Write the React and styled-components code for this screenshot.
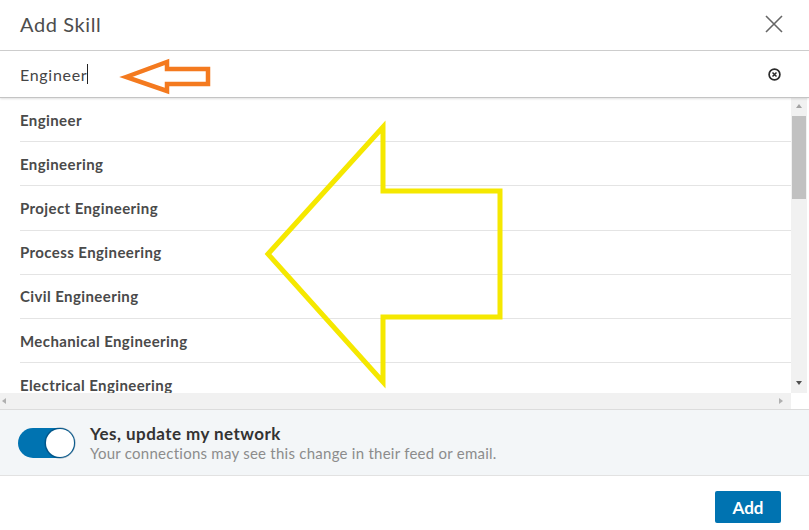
import React from 'react';
import styled, { createGlobalStyle } from 'styled-components';

const Global = createGlobalStyle`
  html, body { margin: 0; padding: 0; background: #fff; }
  body { font-family: Lato, "Open Sans", "Liberation Sans", sans-serif; }
  * { box-sizing: border-box; }
`;

const Modal = styled.div`
  position: relative;
  width: 809px;
  height: 530px;
  overflow: hidden;
  display: flex;
  flex-direction: column;
  background: #fff;
`;

const Header = styled.header`
  height: 51px;
  flex: none;
  display: flex;
  align-items: center;
  justify-content: space-between;
  padding: 0 26px 2px 20px;
  border-bottom: 1px solid #cfcfcf;
`;

const Title = styled.h2`
  margin: 0;
  font-size: 20px;
  letter-spacing: 0.6px;
  font-weight: 400;
  color: #4d4d4d;
`;

const IconButton = styled.button`
  border: 0;
  background: none;
  padding: 0;
  display: flex;
  width: ${p => p.$size}px;
  height: ${p => p.$size}px;
  color: ${p => p.$color};
  cursor: pointer;
`;

const SearchRow = styled.div`
  height: 47px;
  flex: none;
  display: flex;
  align-items: center;
  justify-content: space-between;
  padding: 0 28px 0 20px;
  border-bottom: 1px solid #c4c4c4;
  box-shadow: 0 1px 2px rgba(0, 0, 0, 0.12);
  position: relative;
  z-index: 1;
`;

const Query = styled.span`
  display: flex;
  align-items: center;
  font-size: 16px;
  letter-spacing: 0.7px;
  color: #454545;
`;

const Caret = styled.span`
  display: inline-block;
  width: 1px;
  height: 20px;
  background: #222;
`;

const ScrollArea = styled.div`
  flex: none;
  display: grid;
  grid-template-columns: 1fr 16px;
  grid-template-rows: 295px 16px;
  padding-right: 2px;
`;

const Viewport = styled.ul`
  margin: 0;
  padding: 0;
  list-style: none;
  overflow: hidden;
`;

const Row = styled.li`
  padding-left: 20px;
`;

const RowInner = styled.div`
  height: 44.2px;
  display: flex;
  align-items: center;
  border-bottom: 1px solid #e4e4e4;
  font-size: 15px;
  letter-spacing: 0.4px;
  font-weight: 700;
  color: #4a4a4a;
`;

const VBar = styled.div`
  background: #f1f1f1;
  display: flex;
  flex-direction: column;
  align-items: center;
  justify-content: space-between;
  padding: 6px 0 8px;
  position: relative;
`;

const Thumb = styled.div`
  position: absolute;
  left: 1px;
  right: 1px;
  top: 18px;
  height: 83px;
  background: #c1c1c1;
`;

const HBar = styled.div`
  background: #f1f1f1;
  display: flex;
  align-items: center;
  justify-content: space-between;
  padding: 0 8px 0 2px;
`;

const Corner = styled.div`
  background: #fff;
`;

const Tri = styled.span`
  width: 0;
  height: 0;
  border-style: solid;
  ${p => p.$dir === 'up' && `border-width: 0 3.5px 4px 3.5px; border-color: transparent transparent ${p.$c} transparent;`}
  ${p => p.$dir === 'down' && `border-width: 4px 3.5px 0 3.5px; border-color: ${p.$c} transparent transparent transparent;`}
  ${p => p.$dir === 'left' && `border-width: 3.5px 4px 3.5px 0; border-color: transparent ${p.$c} transparent transparent;`}
  ${p => p.$dir === 'right' && `border-width: 3.5px 0 3.5px 4px; border-color: transparent transparent transparent ${p.$c};`}
`;

const ShareSection = styled.section`
  height: 67px;
  flex: none;
  display: flex;
  align-items: center;
  gap: 14px;
  padding: 0 19px 0 18px;
  background: #f3f6f8;
  border-top: 1px solid #dcdcdc;
  border-bottom: 1px solid #e2e2e2;
`;

const Track = styled.div`
  width: 57px;
  height: 30px;
  flex: none;
  border-radius: 15px;
  background: #0073b1;
  display: flex;
  align-items: center;
  justify-content: flex-end;
  padding: 1px;
`;

const Knob = styled.div`
  width: 28px;
  height: 28px;
  border-radius: 50%;
  background: #fff;
  box-shadow: 0 0 0 1.5px rgba(0, 50, 90, 0.45);
`;

const ShareText = styled.div`
  display: flex;
  flex-direction: column;
  padding-left: 1px;
`;

const ShareTitle = styled.div`
  font-size: 17px;
  letter-spacing: 0.45px;
  line-height: 21px;
  font-weight: 700;
  color: #333;
`;

const ShareSub = styled.div`
  font-size: 15px;
  letter-spacing: 0.25px;
  line-height: 19px;
  color: #8c8c8c;
`;

const Footer = styled.footer`
  flex: 1;
  display: flex;
  align-items: center;
  justify-content: flex-end;
  padding: 8px 28px 0 0;
`;

const PrimaryButton = styled.button`
  width: 66px;
  height: 32px;
  border: 0;
  border-radius: 2px;
  background: #0073b1;
  color: #fff;
  font-family: inherit;
  font-size: 17px;
  font-weight: 700;
  cursor: pointer;
`;

const Annotations = styled.svg`
  position: absolute;
  left: 0;
  top: 0;
  width: 809px;
  height: 530px;
  pointer-events: none;
  z-index: 5;
`;

const skills = [
  'Engineer',
  'Engineering',
  'Project Engineering',
  'Process Engineering',
  'Civil Engineering',
  'Mechanical Engineering',
  'Electrical Engineering',
];

export default function App() {
  return (
    <>
      <Global />
      <Modal>
        <Header>
          <Title>Add Skill</Title>
          <IconButton $size={18} $color="#666" aria-label="Close">
            <svg width="18" height="18" viewBox="0 0 18 18" fill="none" stroke="currentColor" strokeWidth="1.6">
              <path d="M1 1 L17 17 M17 1 L1 17" />
            </svg>
          </IconButton>
        </Header>
        <SearchRow>
          <Query>
            Engineer<Caret />
          </Query>
          <IconButton $size={13} $color="#2a2a2a" aria-label="Clear">
            <svg width="13" height="13" viewBox="0 0 13 13" fill="none" stroke="currentColor">
              <circle cx="6.5" cy="6.5" r="5.4" strokeWidth="1.7" />
              <path d="M4.5 4.5 L8.5 8.5 M8.5 4.5 L4.5 8.5" strokeWidth="1.5" />
            </svg>
          </IconButton>
        </SearchRow>
        <ScrollArea>
          <Viewport>
            {skills.map(s => (
              <Row key={s}>
                <RowInner>{s}</RowInner>
              </Row>
            ))}
          </Viewport>
          <VBar>
            <Tri $dir="up" $c="#a3a3a3" />
            <Thumb />
            <Tri $dir="down" $c="#505050" />
          </VBar>
          <HBar>
            <Tri $dir="left" $c="#b0b0b0" />
            <Tri $dir="right" $c="#b0b0b0" />
          </HBar>
          <Corner />
        </ScrollArea>
        <ShareSection>
          <Track>
            <Knob />
          </Track>
          <ShareText>
            <ShareTitle>Yes, update my network</ShareTitle>
            <ShareSub>Your connections may see this change in their feed or email.</ShareSub>
          </ShareText>
        </ShareSection>
        <Footer>
          <PrimaryButton>Add</PrimaryButton>
        </Footer>
        <Annotations viewBox="0 0 809 530">
          <polygon
            points="126,77 167,62 167,69 208,69 208,84 167,84 167,91"
            fill="none"
            stroke="#f47a1f"
            strokeWidth="4.5"
            strokeLinejoin="miter"
          />
          <polygon
            points="268,254 383,127 383,191 500,191 500,317 383,317 383,382"
            fill="none"
            stroke="#f5e800"
            strokeWidth="5"
            strokeLinejoin="miter"
          />
        </Annotations>
      </Modal>
    </>
  );
}
